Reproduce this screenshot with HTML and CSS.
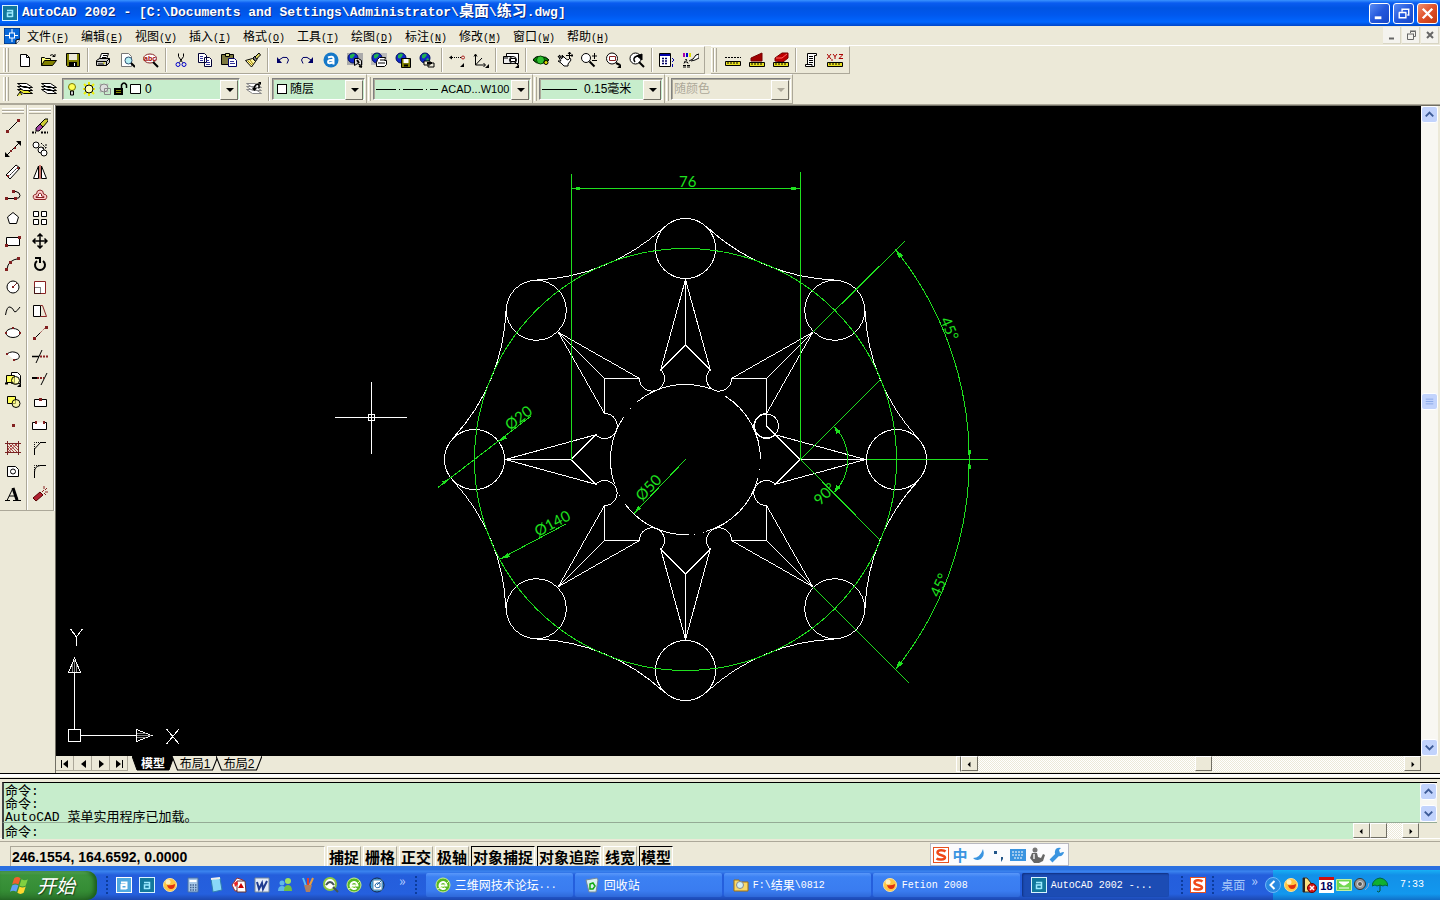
FILE: index.html
```
<!DOCTYPE html>
<html lang="zh-CN">
  <head>
    <meta charset="UTF-8" />
    <meta name="viewport" content="width=device-width, initial-scale=1.0" />
    <title>AutoCAD 2002</title>
    <link rel="stylesheet" href="styles.css" />
  </head>
  <body>
    <!-- shared symbols -->
    <svg class="defs" aria-hidden="true">
      <symbol id="acad" viewBox="0 0 16 16">
        <rect x=".5" y=".5" width="15" height="15" fill="#12789c" stroke="#d8f4ff" />
        <path d="M5 5.500h5.500v6.500M10.500 8H5.500v3.500h5" fill="none" stroke="#9beaff" stroke-width="1.500" />
      </symbol>
      <symbol id="globe" viewBox="0 0 16 16">
        <circle cx="6" cy="6" r="5" fill="#1328c8" stroke="#001060" />
        <path d="M3 3l3-1.500 2 1-1 2-2 2-2-.5zM8 6l2 1-1 3-2-1z" fill="#20b050" stroke="none" />
      </symbol>
      <symbol id="ie" viewBox="0 0 16 16">
        <circle cx="8" cy="8" r="7" fill="#58b820" stroke="#c8f090" />
        <path d="M4.500 8.500h7a3.500 3.500 0 1 0-1 2.500" fill="none" stroke="#fff" stroke-width="2" />
        <path d="M2 12Q9 11 14 4" fill="none" stroke="#e8ffb0" />
      </symbol>
      <symbol id="fetion" viewBox="0 0 16 16">
        <circle cx="8" cy="8" r="6.500" fill="#ffc640" stroke="#f8e0a0" />
        <circle cx="6" cy="5" r="2.500" fill="#fff0b8" />
        <path d="M5 8q4 1 8-1 0 5-4 5-3 0-4-4z" fill="#e03010" />
      </symbol>
      <symbol id="sogou" viewBox="0 0 16 16">
        <rect x=".5" y=".5" width="15" height="15" fill="#fff" stroke="#e85020" />
        <path d="M12.500 4.500C11 3 4.500 2.500 4.500 5.500S12 8 12 10.500 5.500 13 3.500 11.500" fill="none" stroke="#f04818" stroke-width="2.500" />
      </symbol>
    </svg>

    <header class="titlebar">
      <svg class="i" viewBox="0 0 16 16"><use href="#acad" /></svg>
      <h1>AutoCAD 2002 - [C:\Documents and Settings\Administrator\<span>桌面</span>\<span>练习</span>.dwg]</h1>
      <button class="win" aria-label="最小化"><svg viewBox="0 0 20 20"><path d="M5 14.500h7" stroke="#fff" stroke-width="3" /></svg></button>
      <button class="win" aria-label="还原"><svg viewBox="0 0 20 20"><path d="M5.500 9v5.500h7V9M5 9h8M8.500 8V5.500h7v6H14M8 5.500h8" stroke="#fff" fill="none" stroke-width="1.500" /></svg></button>
      <button class="win close" aria-label="关闭"><svg viewBox="0 0 20 20"><path d="M5 5l10 10M15 5L5 15" stroke="#fff" stroke-width="2.500" /></svg></button>
    </header>

    <nav class="menubar">
      <svg class="i" viewBox="0 0 16 16"><path d="M0 0h16v11l-4 5H0z" fill="#0868d8" stroke="#002060" /><path d="M8 1v4M8 10v4M1 7.500h4M10 7.500h4" stroke="#fff" /><rect x="5.500" y="5" width="5" height="5" stroke="#fff" /><path d="M16 11l-4 1v4" fill="#fff" /></svg>
      <button>文件<span>(<u>F</u>)</span></button>
      <button>编辑<span>(<u>E</u>)</span></button>
      <button>视图<span>(<u>V</u>)</span></button>
      <button>插入<span>(<u>I</u>)</span></button>
      <button>格式<span>(<u>O</u>)</span></button>
      <button>工具<span>(<u>T</u>)</span></button>
      <button>绘图<span>(<u>D</u>)</span></button>
      <button>标注<span>(<u>N</u>)</span></button>
      <button>修改<span>(<u>M</u>)</span></button>
      <button>窗口<span>(<u>W</u>)</span></button>
      <button>帮助<span>(<u>H</u>)</span></button>
      <div class="child-win">
        <button aria-label="最小化"><svg viewBox="0 0 16 16"><path d="M5 11.500h5" stroke="#666" stroke-width="2" /></svg></button>
        <button aria-label="还原"><svg viewBox="0 0 16 16"><path d="M4.500 7v5.500h6V7M4 7h7M7.500 6V4.500h5v5H11M7 4h6" stroke="#666" fill="none" /></svg></button>
        <button aria-label="关闭"><svg viewBox="0 0 16 16"><path d="M5 5l6 6M11 5l-6 6" stroke="#666" stroke-width="2" /></svg></button>
      </div>
    </nav>

    <div class="bars bars-standard">
      <div class="bar">
        <i class="grip"></i>
        <button aria-label="新建"><svg class="i" viewBox="0 0 16 16"><path d="M3.500 2.500h6l3 3v9h-9z" fill="#fff" /><path d="M9.500 2.500v3h3" /></svg></button>
        <button aria-label="打开"><svg class="i" viewBox="0 0 16 16"><path d="M.5 13.500v-8h3l1 1h5v2" fill="#ffff80" /><path d="M.5 13.500l3-5h12l-4 5z" fill="#808000" /><path d="M9 3.500q2-2 4.500.5M14 2v2.500h-2.500" /></svg></button>
        <button aria-label="保存"><svg class="i" viewBox="0 0 16 16"><path d="M1.500 1.500h13v13h-12l-1-1z" fill="#808000" /><path d="M4 2h8v6H4z" fill="#ece9d8" stroke="none" /><path d="M4 10h8v4H4z" fill="#000" stroke="none" /><path d="M9.500 11v3" stroke="#fff" /></svg></button>
        <i class="sep"></i>
        <button aria-label="打印"><svg class="i" viewBox="0 0 16 16"><path d="M4.500 7l2-5.500h7l-2 5.500" fill="#fff" /><path d="M1.500 8.500l3-2h10v4l-3 3h-10z" fill="#ccc" /><path d="M1.500 9.500h10v4M11.500 9.500l3-3M3 12h6M8 3.500h4M7 5.500h4" /><path d="M8 11h2" stroke="#dd0" /></svg></button>
        <button aria-label="打印预览"><svg class="i" viewBox="0 0 16 16"><path d="M2.500 1.500h7l3 3v10h-10z" fill="#fff" stroke="#777" /><circle cx="9.500" cy="8.500" r="3.500" fill="#b8f0f4" stroke="#357" /><path d="M12 11l4 4" stroke-width="2" /></svg></button>
        <button aria-label="查找"><svg class="i" viewBox="0 0 16 16"><ellipse cx="7" cy="6.500" rx="6.500" ry="4.500" fill="#fff" stroke="#822" /><text x="1" y="9" class="abc">abc</text><path d="M10 10l5 5" stroke-width="2" /></svg></button>
        <i class="sep"></i>
        <button aria-label="剪切"><svg class="i" viewBox="0 0 16 16"><path d="M5.500 1.500v3l4 6M10.500 1.500v3l-4 6" /><circle cx="5" cy="12.500" r="2" stroke="#00c" /><circle cx="11" cy="12.500" r="2" stroke="#00c" /></svg></button>
        <button aria-label="复制"><svg class="i" viewBox="0 0 16 16"><path d="M1.500 1.500h6l2 2v7h-8zM7.500 5.500h5l2 2v7h-7z" fill="#fff" stroke="#003" /><path d="M3 4.500h3M3 6.500h3M3 8.500h3M9 8.500h3M9 10.500h4M9 12.500h4" stroke="#339" /></svg></button>
        <button aria-label="粘贴"><svg class="i" viewBox="0 0 16 16"><path d="M.5 2.500h12v10H.5z" fill="#7c7840" /><path d="M4.500 1.500h4v3h-4z" fill="#dd8" /><path d="M7.500 6.500h6l2 2v6h-8z" fill="#fff" stroke="#006" /><path d="M9 9.500h4M9 11.500h5" stroke="#339" /></svg></button>
        <button aria-label="特性匹配"><svg class="i" viewBox="0 0 16 16"><path d="M.5 8.500l7-2 3 3-4 5.500z" fill="#fff8a0" /><path d="M8 6l2-2 2.500 2.500-2 3z" fill="#888" /><path d="M10 5l4-4 1.500 2-4 4z" fill="#ddd860" /><path d="M3 9l4 4M5 8l3 4" stroke="#a08000" /></svg></button>
        <i class="sep"></i>
        <button aria-label="放弃"><svg class="i" viewBox="0 0 16 16"><path d="M4 8q4-4 8-2.500 3 2 0 6" stroke="#006" /><path d="M2 5v6h5z" fill="#006" stroke="none" /></svg></button>
        <button aria-label="重做"><svg class="i" viewBox="0 0 16 16"><path d="M12 8q-4-4-8-2.500-3 2 0 6" stroke="#006" /><path d="M14 5v6H9z" fill="#006" stroke="none" /></svg></button>
        <button aria-label="Point A"><svg class="i" viewBox="0 0 16 16"><circle cx="8" cy="8" r="7.500" fill="#1578c8" stroke="none" /><path d="M5 5.500q5-2 5.500 1v6M10.500 8Q5 7.500 5 10t5.500 0" stroke="#fff" stroke-width="2" /></svg></button>
        <button aria-label="网上会议"><svg class="i" viewBox="0 0 16 16"><path d="M0 1h16v12H0z" fill="#aaa" stroke="none" /><use href="#globe" /><path d="M7.500 6.500h4l3 2v5l-4-2-3 2z" fill="#ddd" /><path d="M10 8l2 3M12 14l3 1" stroke-width="2" /></svg></button>
        <button aria-label="发布"><svg class="i" viewBox="0 0 16 16"><path d="M0 1h16v12H0z" fill="#bbb" stroke="none" /><use href="#globe" /><path d="M6.500 7.500l2-2h6l-1 3h2v4l-2 2h-8v-4z" fill="#fff" /><path d="M7 11h7M9 8h4" /></svg></button>
        <button aria-label="电子传递"><svg class="i" viewBox="0 0 16 16"><use href="#globe" /><path d="M6.500 6.500h9v9h-9z" fill="#808000" /><path d="M8.500 7h5v4h-5z" fill="#fff" stroke="none" /><path d="M9 13.500h4" stroke-width="2" /></svg></button>
        <button aria-label="超链接"><svg class="i" viewBox="0 0 16 16"><use href="#globe" /><path d="M5 9h6v4H5zM9 11h6v4H9z" fill="#ece9d8" /><path d="M8 11h5" stroke-width="2" /></svg></button>
        <i class="sep"></i>
        <button aria-label="临时追踪点"><svg class="i" viewBox="0 0 16 16"><path d="M1 5.500h11" stroke-dasharray="1 1" /><path d="M0 5.500l3-2v4zM11 15h4v-4z" fill="#000" stroke="none" /><circle cx="14" cy="5.500" r="1.500" stroke="#a22" /></svg></button>
        <button aria-label="UCS"><svg class="i" viewBox="0 0 16 16"><path d="M2.500 3v10H12M2.500 13L9 6M1 4.500L2.500 2 4 4.500M10.500 11l2 2-2 2" /><path d="M12 16h4v-4z" fill="#000" stroke="none" /></svg></button>
        <i class="sep"></i>
        <button aria-label="命名视图"><svg class="i" viewBox="0 0 16 16"><path d="M3.500 1.500h12v10h-12z" fill="#fff" /><path d="M.5 4.500h9v7h-9z" fill="#eee" /><circle cx="10" cy="8" r="3.500" fill="#fff" /><path d="M7.500 6.500h5v3h-5zM12 10l3 3M1 6h4" /><path d="M12 16h4v-4z" fill="#000" stroke="none" /></svg></button>
        <i class="sep"></i>
        <button aria-label="三维动态观察"><svg class="i" viewBox="0 0 16 16"><path d="M0 8q3-5 8-3 5-1 8 3-4 4-8 3-5 1-8-3z" fill="#080" /><circle cx="7.500" cy="8" r="4" fill="#30c030" stroke="#040" /><circle cx="13" cy="10.500" r="2" fill="#dd0" /></svg></button>
        <button aria-label="实时平移"><svg class="i" viewBox="0 0 16 16"><path d="M1 4l4 3-3-4 4 3-1-3 4 4 2 1 2-2 1 2-3 4v2H7L4 11 1 9h3z" fill="#fff" /><path d="M12.500 0v7M9 3.500h7M11 2l1.500-2L14 2M14.500 2l1.500 1.500L14.500 5" /></svg></button>
        <button aria-label="实时缩放"><svg class="i" viewBox="0 0 16 16"><circle cx="5" cy="6" r="4.500" fill="#fff" /><path d="M8.500 9.500l5 5" stroke-width="2" /><path d="M13.500 1v6M11 4h5M11 8.500h5" /></svg></button>
        <button aria-label="窗口缩放"><svg class="i" viewBox="0 0 16 16"><circle cx="7" cy="6.500" r="5.500" fill="#fff" /><path d="M4.500 4.500h6v4h-6z" stroke="#822" /><path d="M11 11l4 2" stroke-width="2" /><path d="M12 16h4v-4z" fill="#000" stroke="none" /></svg></button>
        <button aria-label="缩放上一个"><svg class="i" viewBox="0 0 16 16"><circle cx="6.500" cy="6.500" r="5.500" fill="#fff" /><path d="M10 10l5 5" stroke-width="2" /><path d="M6 10q-3-4 2-6l3-1" stroke-width="1.500" /><path d="M13 2v6L8 4z" fill="#000" /></svg></button>
        <i class="sep"></i>
        <button aria-label="设计中心"><svg class="i" viewBox="0 0 16 16"><path d="M.5 1.500h11v13H.5z" fill="#fff" /><path d="M1 3h10" stroke="#00a" stroke-width="2" /><path d="M3 6.500h6M3 9h6M3 11.500h6" stroke="#006" stroke-width="1.500" stroke-dasharray="2 1" /><path d="M13 6l2 2-2 2M13.500 12v3" stroke="#00a" stroke-width="1" /></svg></button>
        <button aria-label="特性"><svg class="i" viewBox="0 0 16 16"><path d="M0 1h2v4H0z" fill="#a0a" stroke="none" /><path d="M3 1h2v4H3z" fill="#00c" stroke="none" /><path d="M6 1h2v4H6z" fill="#dd0" stroke="none" /><path d="M1 11.500L3 7l2 4.500M2 10h2M0 13.500h8M0 15h8" stroke-dasharray="3 1" /><path d="M6 9l4-2 3-4 3-1v4l-4 2-4 1" fill="#fff" /></svg></button>
      </div>
      <div class="bar">
        <i class="grip"></i>
        <button aria-label="距离"><svg class="i" viewBox="0 0 16 16"><path d="M0 5.500h16" stroke-dasharray="2 1" /><path d="M.5 9.500h15v4H.5z" fill="#e8e020" /><path d="M3 10v2M6 10v2M9 10v2M12 10v2" /></svg></button>
        <button aria-label="面积"><svg class="i" viewBox="0 0 16 16"><path d="M2 9V6l11-5v8z" fill="#a00000" stroke="#700" /><path d="M.5 10.500h15v4H.5z" fill="#e8e020" /><path d="M3 11v2M6 11v2M9 11v2M12 11v2" /></svg></button>
        <button aria-label="质量特性"><svg class="i" viewBox="0 0 16 16"><path d="M2 9V6l7-5h6v5l-5 4z" fill="#c00000" stroke="#700" /><path d="M3 6h6l5-4" stroke="#f66" /><path d="M.5 10.500h15v4H.5z" fill="#e8e020" /><path d="M3 11v2M6 11v2M9 11v2M12 11v2" /></svg></button>
        <i class="sep"></i>
        <button aria-label="列表"><svg class="i" viewBox="0 0 16 16"><path d="M4.500 1.500h9v2h-2v11h-9v-2h2z" fill="#fff" /><path d="M6 4.500h4M6 6.500h4M6 8.500h4M6 10.500h4M3 12.500h6v2" /></svg></button>
        <button aria-label="定位点"><svg class="i" viewBox="0 0 16 16"><path d="M0 2l4 5M4 2L0 7M6 2l2 2.500L10 2M8 4v3M12 2.500h4l-4 4h4M5 7v2" stroke="#a00" /><path d="M.5 10.500h15v4H.5z" fill="#e8e020" /><path d="M3 11v2M6 11v2M9 11v2M12 11v2" /></svg></button>
      </div>
    </div>

    <div class="bars bars-props">
      <div class="bar">
        <i class="grip"></i>
        <button aria-label="将对象的图层置为当前"><svg class="i" viewBox="0 0 16 16"><path d="M.5 8.500h9l6 4h-9z" fill="#ee3" /><path d="M.5 5.500h9l6 4h-9zM.5 2.500h9l6 4h-9z" fill="#fff" /><path d="M0 15l3-4 2 3" fill="#ee3" /></svg></button>
        <button aria-label="图层"><svg class="i" viewBox="0 0 16 16"><path d="M.5 8.500h9l6 4h-9zM.5 5.500h9l6 4h-9zM.5 2.500h9l6 4h-9z" fill="#fff" /></svg></button>
        <div class="combo combo-layer">
          <div class="layer-state">
            <svg class="i" viewBox="0 0 16 16"><circle cx="7" cy="6" r="3.500" fill="#ff5" stroke="#770" /><path d="M5.500 10h3v4h-3z" fill="#ccc" /></svg>
            <svg class="i" viewBox="0 0 16 16"><path d="M3 3l10 10M13 3L3 13M8 1v14M2 8h12" stroke="#ee0" stroke-width="2" /><circle cx="8" cy="8" r="4" fill="#ffb" /></svg>
            <svg class="i" viewBox="0 0 16 16"><path d="M3 3l8 8M11 3l-8 8" stroke="#bbb" stroke-width="2" /><circle cx="7" cy="7" r="4" fill="#ddd" stroke="#888" /><path d="M7.500 7.500h6v6h-6z" stroke="#888" /></svg>
            <svg class="i" viewBox="0 0 16 16"><path d="M1 7h9v7H1z" fill="#000" stroke="none" /><path d="M3 9.500h5M3 11.500h5" stroke="#880" /><path d="M8.500 7V4q2.500-4 5 0v3" stroke-width="1.500" /></svg>
            <svg class="i" viewBox="0 0 16 16"><path d="M1.500 3.500h10v9h-10z" fill="#fff" /></svg>
          </div>
          <select aria-label="图层"><option>0</option></select>
        </div>
        <button aria-label="上一个图层"><svg class="i" viewBox="0 0 16 16"><path d="M.5 8.500h9l6 4h-9zM.5 5.500h9l6 4h-9zM.5 2.500h9l6 4h-9z" fill="#fff" stroke="#888" /><path d="M8 9q0-6 5-6v4" stroke-width="1.500" /><path d="M6 7h5l-2.500 3zM12 1h3v3z" fill="#000" stroke="none" /></svg></button>
        <i class="sep"></i>
        <div class="combo combo-color">
          <span class="swatch"></span>
          <select aria-label="颜色"><option>随层</option></select>
        </div>
      </div>
      <div class="bar">
        <i class="grip narrow"></i>
        <div class="combo combo-ltype">
          <span class="line dashdot"></span>
          <select aria-label="线型"><option>ACAD...W100</option></select>
        </div>
      </div>
      <div class="bar">
        <i class="grip narrow"></i>
        <div class="combo combo-weight">
          <span class="line"></span>
          <select aria-label="线宽"><option>0.15毫米</option></select>
        </div>
      </div>
      <div class="bar">
        <i class="grip narrow"></i>
        <div class="combo combo-plot">
          <select aria-label="打印样式" disabled><option>随颜色</option></select>
        </div>
      </div>
    </div>

    <main class="workspace">
      <aside class="dock">
        <!-- 绘图 -->
        <div class="tools">
          <i class="hgrip"></i>
          <button aria-label="直线"><svg class="i" viewBox="0 0 16 16"><path d="M3 13L13 3" /><path d="M1 12h3v3H1zM12 1h3v3h-3z" class="r" /></svg></button>
          <button aria-label="构造线"><svg class="i" viewBox="0 0 16 16"><path d="M2 14L14 2" /><path d="M0 16v-5l5 5zM16 0v5l-5-5z" fill="#000" stroke="none" /><path d="M5 9h2v2H5zM9 6h2v2H9z" class="r" /></svg></button>
          <button aria-label="多线"><svg class="i" viewBox="0 0 16 16"><path d="M1 11L11 1l4 3L5 15z" fill="#fff" /><path d="M3 13L13 3" stroke-dasharray="2 1" /><path d="M2 11h2v2H2zM12 3h2v2h-2z" class="r" /></svg></button>
          <button aria-label="多段线"><svg class="i" viewBox="0 0 16 16"><path d="M2 11.500h9q4 0 4-3t-4-4H9" /><path d="M0 10h3v3H0zM9 10h3v3H9zM7 3h3v3H7z" class="r" /></svg></button>
          <button aria-label="正多边形"><svg class="i" viewBox="0 0 16 16"><path d="M8 2.500L13.500 7l-2 6.500h-7L2.500 7z" fill="#fff" /></svg></button>
          <button aria-label="矩形"><svg class="i" viewBox="0 0 16 16"><path d="M1.500 4.500h13v8h-13z" fill="#fff" /><path d="M0 11h3v3H0zM13 3h3v3h-3z" class="r" /></svg></button>
          <button aria-label="圆弧"><svg class="i" viewBox="0 0 16 16"><path d="M2 13Q3 4 14 2.500" /><path d="M0 12h3v3H0zM4 5h3v3H4zM12 1h3v3h-3z" class="r" /></svg></button>
          <button aria-label="圆"><svg class="i" viewBox="0 0 16 16"><circle cx="8" cy="8" r="6" fill="#fff" /><path d="M8 8l4-4" stroke="#722" /><path d="M7 7h2v2H7z" class="r" /></svg></button>
          <button aria-label="样条曲线"><svg class="i" viewBox="0 0 16 16"><path d="M.5 13Q2 4 5 5t4 4 6-4" /></svg></button>
          <button aria-label="椭圆"><svg class="i" viewBox="0 0 16 16"><ellipse cx="8" cy="8" rx="7" ry="4.500" fill="#fff" /><path d="M0 7h2v2H0zM14 7h2v2h-2zM7 2h2v2H7z" class="r" /></svg></button>
          <button aria-label="椭圆弧"><svg class="i" viewBox="0 0 16 16"><path d="M2 6q5-4 11-.5 4 5-3.500 6.500" fill="#fff" /><path d="M1 5h2v2H1zM8 11h2v2H8z" class="r" /></svg></button>
          <button aria-label="插入块"><svg class="i" viewBox="0 0 16 16"><path d="M6.500 1.500h6l3 3v8h-9z" fill="#fff" /><path d="M1.500 4.500h8v7h-8z" fill="#ff5" /><circle cx="10.500" cy="9.500" r="4" fill="#ff8" fill-opacity=".6" /><path d="M0 12.500h3" stroke-width="2" /><path d="M12 16h4v-4z" fill="#000" stroke="none" /></svg></button>
          <button aria-label="创建块"><svg class="i" viewBox="0 0 16 16"><path d="M2.500 2.500h8v7h-8z" fill="#ff5" /><circle cx="11" cy="9.500" r="4" fill="#ff8" fill-opacity=".6" /></svg></button>
          <button aria-label="点"><svg class="i" viewBox="0 0 16 16"><path d="M7 7h3v3H7z" class="r" /></svg></button>
          <button aria-label="图案填充"><svg class="i" viewBox="0 0 16 16"><path d="M4 4l8 8M7 4l6 6M10 4l3 3M3 6l6 6M3 9l3 3M12 4l-9 8M8 4L3 9" stroke="#a44" /><path d="M2.500 1v14M13.500 1v14M0 3.500h16M0 12.500h16" stroke="#722" /></svg></button>
          <button aria-label="面域"><svg class="i" viewBox="0 0 16 16"><path d="M2.500 3.500h8l3 3v7h-11z" fill="#fff" /><circle cx="8" cy="8.500" r="2.500" /></svg></button>
          <button aria-label="多行文字"><svg class="i" viewBox="0 0 16 16"><path d="M2 14.500L8 2l5 12.500M4 10h7" stroke-width="1" /><path d="M8 2l4 12" stroke-width="3" /><path d="M0 14.500h5M8 14.500h8" /></svg></button>
        </div>
        <!-- 修改 -->
        <div class="tools">
          <i class="hgrip"></i>
          <button aria-label="删除"><svg class="i" viewBox="0 0 16 16"><path d="M8 6l5-5h3v2l-5 6z" fill="#cc3" /><path d="M4 10l4-4 3 3-4 4H4z" fill="#a040a0" /><path d="M0 14.500h4M9 14.500h7" stroke-width="2" stroke-dasharray="2 1" /></svg></button>
          <button aria-label="复制对象"><svg class="i" viewBox="0 0 16 16"><circle cx="4" cy="4" r="3" fill="#fff" /><circle cx="9" cy="9" r="3" fill="#fff" /><circle cx="12" cy="12" r="3" fill="#fff" /><path d="M9 2l5 5M14 3v4h-4" stroke-dasharray="2 1" /></svg></button>
          <button aria-label="镜像"><svg class="i" viewBox="0 0 16 16"><path d="M6.500 2v12.500h-5zM9.500 2v12.500h5z" fill="#fff" /><path d="M8 1v14" stroke="#a00" /></svg></button>
          <button aria-label="偏移"><svg class="i" viewBox="0 0 16 16"><path d="M2.500 12.500Q-1 8 4.500 7q0-4 3.500-4t3.500 4q5.500 1 2 5.500z" fill="#fcc" stroke="#822" /><path d="M4 10.500q-1-1.500 2.500-1.500V7q1.500-2 3 0v2q3.500 0 2.500 1.500z" fill="#fff" stroke="#822" /></svg></button>
          <button aria-label="阵列"><svg class="i" viewBox="0 0 16 16"><path d="M1.500 1.500h5v5h-5zM9.500 1.500h5v5h-5zM1.500 9.500h5v5h-5zM9.500 9.500h5v5h-5z" fill="#fff" /></svg></button>
          <button aria-label="移动"><svg class="i" viewBox="0 0 16 16"><path d="M8 1v14M1 8h14M5.500 3.500L8 1l2.500 2.500M5.500 12.500L8 15l2.500-2.500M3.500 5.500L1 8l2.500 2.500M12.500 5.500L15 8l-2.500 2.500" stroke-width="1.500" /></svg></button>
          <button aria-label="旋转"><svg class="i" viewBox="0 0 16 16"><path d="M5 5a5 5 0 1 0 6 0" stroke-width="2" /><path d="M3 2h5v5" stroke-width="2" /></svg></button>
          <button aria-label="缩放"><svg class="i" viewBox="0 0 16 16"><path d="M2.500 2.500h11v12h-11z" fill="#fff" stroke="#822" /><path d="M2.500 8.500h6v6h-6z" stroke-dasharray="1 1" /></svg></button>
          <button aria-label="拉伸"><svg class="i" viewBox="0 0 16 16"><path d="M1.500 3.500h7v11h-7z" fill="#fff" /><path d="M8.500 3.500h2l4 11h-6" stroke="#822" /></svg></button>
          <button aria-label="拉长"><svg class="i" viewBox="0 0 16 16"><path d="M3 13l5-5" /><path d="M8 8l6-6" stroke="#822" stroke-dasharray="1 1" /><path d="M1 12h3v3H1zM13 1h3v3h-3z" class="r" /></svg></button>
          <button aria-label="修剪"><svg class="i" viewBox="0 0 16 16"><path d="M4 15l6-13" /><path d="M0 8.500h7" stroke-width="1.500" /><path d="M8 8.500h8" stroke="#822" stroke-dasharray="2 1" stroke-width="2" /></svg></button>
          <button aria-label="延伸"><svg class="i" viewBox="0 0 16 16"><path d="M9 14l6-12" /><path d="M0 7h5" stroke-width="2" /><path d="M5 7h7" stroke="#822" stroke-dasharray="2 1" stroke-width="2" /></svg></button>
          <button aria-label="打断于点"><svg class="i" viewBox="0 0 16 16"><path d="M2.500 5.500h12v7h-12z" fill="#fff" /><path d="M7 4h3v3H7z" class="r" /></svg></button>
          <button aria-label="打断"><svg class="i" viewBox="0 0 16 16"><path d="M4 5.500H.5v7h14v-7H12" fill="#fff" /><path d="M3 4h2v3H3zM11 4h2v3h-2z" class="r" /></svg></button>
          <button aria-label="倒角"><svg class="i" viewBox="0 0 16 16"><path d="M2.500 15V9l6-6.500H14" /><path d="M2.500 9V2.500H9" stroke-dasharray="1 1" /></svg></button>
          <button aria-label="圆角"><svg class="i" viewBox="0 0 16 16"><path d="M2.500 15V9q0-6 6-6.500H14" /><path d="M2.500 9V2.500H9" stroke-dasharray="1 1" /></svg></button>
          <button aria-label="分解"><svg class="i" viewBox="0 0 16 16"><path d="M1 12l7-6 3 3-7 6z" fill="#b02030" stroke="#500" /><path d="M10 6l2-2M12 0v3M15 2l-2 2M16 6h-3M12 7l2 2" stroke="#822" /></svg></button>
        </div>
      </aside>

      <section class="view">
        <div class="canvas-row">
          <svg class="canvas" viewBox="56 106 1365 650" role="img" aria-label="练习.dwg">
            <g transform="translate(685.5 459.5)" class="white">
              <g id="arm">
                <circle cx="0" cy="-211" r="30" />
                <path d="M22-232A198 198 0 0 0 148.500-179.500" />
                <path d="M0-180L-24.750-89.800L0-114.500L24.750-89.800L0-180V-114.500" />
                <path d="M24.750-89.800A12.500 12.500 0 1 0 46-81" />
              </g>
              <use href="#arm" transform="rotate(45)" />
              <use href="#arm" transform="rotate(90)" />
              <use href="#arm" transform="rotate(135)" />
              <use href="#arm" transform="rotate(180)" />
              <use href="#arm" transform="rotate(225)" />
              <use href="#arm" transform="rotate(270)" />
              <use href="#arm" transform="rotate(315)" />
            </g>
            <!-- hub circle, broken where it was trimmed -->
            <g class="white">
              <path d="M637 402A75 75 0 0 1 711 389M725 396A75 75 0 0 1 760.500 459.500M758 478A75 75 0 0 1 706 531.500M689.500 534.500A75 75 0 0 1 625.500 504.500M614.500 484A75 75 0 0 1 623.500 417.500" />
              <path d="M630 408.500h1M619 495.500h1M694 534.500h1M703 532.500h1M759 469.500h1" />
              <circle cx="766.500" cy="426" r="12" />
              <path d="M766.500 413V426L800 459.500" />
            </g>
            <g class="green">
              <circle cx="685.500" cy="459.500" r="211" />
              <path d="M571.500 174V459.500M800.500 172V459.500M571 188.500H800" />
              <path d="M813 332L905 241M813 587L909 683M800.500 459.500L880 380M800.500 459.500L880 540M867 459.500H988" />
              <path d="M895.500 249.500A336 336 0 0 1 895.500 669.500M834.500 427A46.500 46.500 0 0 1 834.500 492" />
              <path d="M438 487.500L531 416M500 559L566 524M634 513.500L685.500 459.500" />
            </g>
            <g class="arrow">
              <path d="M571 188.500l9-2v4zM800 188.500l-9-2v4z" />
              <path d="M895.500 249.500l3.500 9 4-3zM895.500 669.500l3.500-9 4 3zM969.500 459l-2-9h4zM969.500 460l-2 9h4z" />
              <path d="M834.500 427l2 7 4-3zM834.500 492l2-7 4 3z" />
              <path d="M499 441.500l6-6 2 3zM450 478.500l-6 6-2-3zM500 559l8-6 2 4zM634 513.500l4-8 3 3z" />
            </g>
            <g class="dim">
              <text x="679" y="187">76</text>
              <text transform="translate(940 320) rotate(66)">45°</text>
              <text transform="translate(939 598) rotate(-65)">45°</text>
              <text transform="translate(820 506) rotate(-45)">90°</text>
              <text transform="translate(510 431) rotate(-37)">Ø20</text>
              <text transform="translate(538 537) rotate(-28)">Ø140</text>
              <text transform="translate(642 502) rotate(-46)">Ø50</text>
            </g>
            <!-- cursor and UCS icon -->
            <g class="white">
              <path d="M335 417.500H407M371.500 382V454M368.500 414.500h6v6h-6z" />
              <path d="M68.500 729.500h12v12h-12zM74.500 729V672M81 735.500H136M68.500 672.500h12l-6-14.500zM136.500 729.500v12l15-6z" />
              <path class="hatch" d="M72.500 664v8M74.500 660v12M76.500 664v8M137 733.500h9M137 735.500h14M137 737.500h9" />
              <path d="M70.500 629L76.500 637V646M82.500 629L76.500 637M166.500 729L179 744M179 729L166.500 744" />
            </g>
          </svg>
          <div class="vscroll">
            <button class="luna" aria-label="向上滚动"><svg viewBox="0 0 16 16"><path d="M4 10l4-4 4 4" /></svg></button>
            <i class="space-before"></i>
            <button class="luna thumb" aria-label="垂直滑块"><svg viewBox="0 0 16 16"><path d="M4 5.500h8M4 8h8M4 10.500h8" class="lines" /></svg></button>
            <i class="space-after"></i>
            <button class="luna" aria-label="向下滚动"><svg viewBox="0 0 16 16"><path d="M4 6l4 4 4-4" /></svg></button>
          </div>
        </div>
        <div class="sheet-row">
          <div class="sheet-nav">
            <button aria-label="第一个"><svg viewBox="0 0 16 16"><path d="M4 4h1v8H4zM11 4v8L6 8z" /></svg></button>
            <button aria-label="上一个"><svg viewBox="0 0 16 16"><path d="M11 4v8L6 8z" /></svg></button>
            <button aria-label="下一个"><svg viewBox="0 0 16 16"><path d="M6 4v8l5-4z" /></svg></button>
            <button aria-label="最后一个"><svg viewBox="0 0 16 16"><path d="M5 4v8l5-4zM11 4h1v8h-1z" /></svg></button>
          </div>
          <div class="sheets">
            <button class="sheet active"><svg viewBox="0 0 42 15" preserveAspectRatio="none"><path d="M0 0L5 14H37L42 0" /></svg><span>模型</span></button>
            <button class="sheet"><svg viewBox="0 0 42 15" preserveAspectRatio="none"><path d="M0 0L5 14H37L42 0" /></svg><span>布局1</span></button>
            <button class="sheet"><svg viewBox="0 0 42 15" preserveAspectRatio="none"><path d="M0 0L5 14H37L42 0" /></svg><span>布局2</span></button>
          </div>
          <div class="hscroll">
            <i class="split"></i>
            <button class="classic" aria-label="向左滚动"><svg viewBox="0 0 16 16"><path d="M9 5v6L6 8z" /></svg></button>
            <i class="track left"></i>
            <button class="classic" aria-label="水平滑块"></button>
            <i class="track right"></i>
            <button class="classic" aria-label="向右滚动"><svg viewBox="0 0 16 16"><path d="M7 5v6l3-3z" /></svg></button>
          </div>
        </div>
      </section>
    </main>

    <section class="command">
      <div class="history">
        <div class="history-text">
          <p>命令<span>:</span></p>
          <p>命令<span>:</span></p>
          <p><span>AutoCAD </span>菜单实用程序已加载。</p>
        </div>
        <div class="vscroll">
          <button class="luna" aria-label="历史向上"><svg viewBox="0 0 16 16"><path d="M4 10l4-4 4 4" /></svg></button>
          <i class="space-after"></i>
          <button class="luna" aria-label="历史向下"><svg viewBox="0 0 16 16"><path d="M4 6l4 4 4-4" /></svg></button>
        </div>
      </div>
      <div class="prompt">
        <label for="cmd">命令<span>:</span></label>
        <input id="cmd" type="text" />
        <div class="hscroll small">
          <button class="classic" aria-label="命令向左"><svg viewBox="0 0 16 16"><path d="M9 5v6L6 8z" /></svg></button>
          <button class="classic" aria-label="命令滑块"></button>
          <i class="track"></i>
          <button class="classic" aria-label="命令向右"><svg viewBox="0 0 16 16"><path d="M7 5v6l3-3z" /></svg></button>
        </div>
      </div>
    </section>

    <footer class="status">
      <output class="coords">246.1554, 164.6592, 0.0000</output>
      <button>捕捉</button>
      <button>栅格</button>
      <button>正交</button>
      <button>极轴</button>
      <button class="on">对象捕捉</button>
      <button class="on">对象追踪</button>
      <button>线宽</button>
      <button class="on">模型</button>
      <!-- floating input method bar -->
      <div class="ime">
        <svg viewBox="0 0 16 16"><use href="#sogou" /></svg>
        <span>中</span>
        <svg viewBox="0 0 16 16"><path d="M12 2q3 9-5 11-3 .5-5-2 7 0 10-9z" fill="#3a94e0" /></svg>
        <svg viewBox="0 0 16 16"><path d="M4 4h3v3H4z" fill="#258" /><path d="M11 10h2v2l-2 3z" fill="#258" /></svg>
        <svg viewBox="0 0 16 16"><path d="M0 2h16v12H0z" fill="#3a94e0" /><path d="M2 5h12M2 8h12M4 11h8" stroke="#fff" stroke-dasharray="2 1" /></svg>
        <svg viewBox="0 0 16 16"><circle cx="6" cy="3" r="2.500" fill="#777" /><path d="M3 6h5l1 4 3 1 2-4 2 1-2 6-4 2H5L1 11z" fill="#666" /><path d="M5 7v5" stroke="#ccc" stroke-width="2" /></svg>
        <svg viewBox="0 0 16 16"><path d="M2 14L9 7" stroke="#3a94e0" stroke-width="4" /><path d="M14 5l-3 1-1-3 2-2q-5-1-6 3t3 5q5 1 6-4z" fill="#3a94e0" /></svg>
      </div>
    </footer>

    <div class="taskbar">
      <button class="start">
        <svg viewBox="0 0 20 20"><path d="M4 3q3-2 6 0L8 9q-3-2-6 0z" fill="#f06030" /><path d="M11 4q3 2 6 0l-2 6q-3 2-6 0z" fill="#80d040" /><path d="M2 10q3-2 6 0l-2 6q-3-2-6 0z" fill="#60a0f8" /><path d="M9 11q3 2 6 0l-2 6q-3 2-6 0z" fill="#ffd830" /></svg>
        <span>开始</span>
      </button>
      <div class="quick">
        <i class="dots"></i>
        <button aria-label="AutoCAD"><svg viewBox="0 0 16 16"><rect x=".5" y=".5" width="15" height="15" fill="#4fa8e0" stroke="#fff" /><path d="M5 5.500h5.500v6.500M10.500 8H5.500v3.500h5" fill="none" stroke="#fff" stroke-width="2" /></svg></button>
        <button aria-label="AutoCAD 2002"><svg viewBox="0 0 16 16"><use href="#acad" /></svg></button>
        <button aria-label="飞信"><svg viewBox="0 0 16 16"><use href="#fetion" /></svg></button>
        <button aria-label="计算器"><svg viewBox="0 0 16 16"><path d="M3 1h10v14H3z" fill="#a8c8e8" stroke="#4870a8" /><path d="M4.500 3h7v2h-7z" fill="#fff" /><path d="M5 8h7M5 10.500h7M5 13h7" stroke="#406090" stroke-width="1.500" stroke-dasharray="1.500 1" /></svg></button>
        <button aria-label="记事本"><svg viewBox="0 0 16 16"><path d="M3 2l9-1 2 12-9 2z" fill="#88d8f8" stroke="#3080b0" /><path d="M3 2l9-1" stroke="#eee" stroke-width="2" /></svg></button>
        <button aria-label="纸牌"><svg viewBox="0 0 16 16"><path d="M1 8l5-7 6 2-1 10-7 1z" fill="#fff" stroke="#933" /><path d="M6 4h8l1 11H6z" fill="#fff" stroke="#633" /><path d="M10 6l3 5H7z" fill="#c00" /><path d="M3 6l3-2 1 3-3 3z" fill="#e22" /></svg></button>
        <button aria-label="Word"><svg viewBox="0 0 16 16"><path d="M1 1h14v14H1z" fill="#e4ecfa" stroke="#789" /><path d="M3 5l2 7 3-6 1 6 4-8" fill="none" stroke="#203c90" stroke-width="2" /></svg></button>
        <button aria-label="Messenger"><svg viewBox="0 0 16 16"><circle cx="5" cy="6" r="2.500" fill="#60b8e8" /><path d="M1 14q0-5 4-5t4 5z" fill="#60b8e8" /><circle cx="11" cy="4" r="3" fill="#a0e060" /><path d="M7 14q0-6 4-6t4 6z" fill="#70c040" /></svg></button>
        <button aria-label="画图"><svg viewBox="0 0 16 16"><path d="M3 1l3 8" stroke="#60c0f0" stroke-width="2" /><path d="M13 1l-4 9" stroke="#e8a040" stroke-width="2" /><path d="M8 1v9" stroke="#e04030" stroke-width="2" /><path d="M4 8h8l-2 7H6z" fill="#b08060" /></svg></button>
        <button aria-label="搜索"><svg viewBox="0 0 16 16"><circle cx="7" cy="7" r="6" fill="#fff" stroke="#90c840" stroke-width="2" /><path d="M3 8q4-6 8 0M10 10l5 5" fill="none" stroke="#455" stroke-width="2" /></svg></button>
        <button aria-label="Internet Explorer"><svg viewBox="0 0 16 16"><use href="#ie" /></svg></button>
        <button aria-label="Outlook"><svg viewBox="0 0 16 16"><circle cx="8" cy="8" r="7" fill="#48a8e8" stroke="#124" /><path d="M4 3h9v10H4z" fill="#fff" stroke="#58a" /><path d="M6 8q1-3 5-2v4q-5 2-5-2M8 8l5-5" fill="none" stroke="#2468a8" /></svg></button>
        <span class="more">»</span>
      </div>
      <div class="tasks">
        <i class="dots"></i>
        <button class="task"><svg viewBox="0 0 16 16"><use href="#ie" /></svg>三维网技术论坛<span>...</span></button>
        <button class="task"><svg viewBox="0 0 16 16"><path d="M2 3l11-2 1 2-2 12H5z" fill="#d8f0f0" stroke="#789" /><path d="M6 7l3-1 2 3-2 3H6z" fill="none" stroke="#1a1" stroke-width="1.500" /></svg>回收站</button>
        <button class="task"><svg viewBox="0 0 16 16"><path d="M1 3h5l1 2h8v9H1z" fill="#f8d868" stroke="#a07010" /><circle cx="7" cy="8" r="3.500" fill="#d0f0f8" stroke="#888" /></svg><span>F:\</span>结果<span>\0812</span></button>
        <button class="task"><svg viewBox="0 0 16 16"><use href="#fetion" /></svg><span>Fetion 2008</span></button>
        <button class="task active"><svg viewBox="0 0 16 16"><use href="#acad" /></svg><span>AutoCAD 2002 -...</span></button>
      </div>
      <div class="deskband">
        <i class="dots"></i>
        <svg viewBox="0 0 16 16"><use href="#sogou" /></svg>
        <i class="dots"></i>
        <a href="#desktop">桌面</a>
        <span class="more">»</span>
      </div>
      <div class="tray">
        <button class="expand" aria-label="显示隐藏的图标"><svg viewBox="0 0 16 16"><circle cx="8" cy="8" r="7.500" fill="#2888e0" stroke="#70b8f8" /><path d="M9.500 4l-4 4 4 4" fill="none" stroke="#fff" stroke-width="2" /></svg></button>
        <svg viewBox="0 0 16 16"><use href="#fetion" /></svg>
        <svg viewBox="0 0 16 16"><path d="M2 1v14h8V6L6 1z" fill="#f8e080" stroke="#432" /><path d="M3 1v14" stroke="#222" stroke-width="2" /><circle cx="11" cy="11" r="4.500" fill="#d81818" stroke="#600" /><path d="M9 9l4 4M13 9l-4 4" stroke="#fff" stroke-width="1.500" /></svg>
        <span class="date">18</span>
        <svg viewBox="0 0 16 16"><path d="M.5 2.500h15v11H.5z" fill="#70d850" stroke="#c0f0a0" /><path d="M3 5h10l-4 3H7zM3 11h10" fill="#fff" stroke="#fff" /></svg>
        <svg viewBox="0 0 16 16"><circle cx="6" cy="7" r="5.500" fill="#999" stroke="#333" /><circle cx="6" cy="7" r="2.500" fill="#555" stroke="#ddd" /><path d="M11 13q4-3 4-7" fill="none" stroke="#9ac" /></svg>
        <svg viewBox="0 0 16 16"><path d="M0 9Q1 2 8 1q7 1 8 8l-3-1-2 1-3-1-3 1-2-1z" fill="#10b030" stroke="#064" /><path d="M8 8v6q-1 2-3 0" fill="none" stroke="#053" /></svg>
        <time>7:33</time>
      </div>
    </div>
  </body>
</html>
```

FILE: styles.css
```
* {
  box-sizing: border-box;
}
body {
  margin: 0;
  height: 100vh;
  display: flex;
  flex-direction: column;
  overflow: hidden;
  background-color: #ece9d8;
  color: #000;
  font-family: "Liberation Sans", "Noto Sans CJK SC", sans-serif;
  font-size: 12px;
}
button,
select,
input {
  margin: 0;
  padding: 0;
  border: 0;
  background: none;
  color: inherit;
  font: inherit;
}
button {
  flex: none;
}
svg {
  display: block;
  flex: none;
}
.defs {
  position: absolute;
  width: 0;
  height: 0;
}
.i {
  width: 16px;
  height: 16px;
  fill: none;
  stroke: #000;
}
.r {
  fill: #822020;
  stroke: none;
}
.abc {
  font: bold 7px "Liberation Sans", sans-serif;
  fill: #a00000;
  stroke: none;
}

/* title bar */
.titlebar {
  flex: none;
  height: 26px;
  display: flex;
  align-items: center;
  gap: 3px;
  padding: 0 2px;
  background: linear-gradient(#3a93ff 0, #0a5cf0 3px, #0054e3 8px, #0058ee 15px, #0066ff 22px, #0046c8 26px);
}
.titlebar h1 {
  flex: 1;
  margin: 0;
  padding-left: 1px;
  color: #fff;
  font: bold 13px "Liberation Mono", "Noto Sans CJK SC", monospace;
  line-height: 20px;
  text-shadow: 1px 1px #0a2a80;
  white-space: nowrap;
}
.titlebar h1 span {
  font-size: 15px;
}
.win {
  width: 21px;
  height: 21px;
  border: 1px solid #fff;
  border-radius: 3px;
  background: linear-gradient(135deg, #5a8cf4, #2458dc 50%, #1848c8);
}
.win.close {
  background: linear-gradient(135deg, #f09070, #e05028 50%, #c03810);
}
.win svg {
  width: 19px;
  height: 19px;
}

/* menu bar */
.menubar {
  flex: none;
  height: 20px;
  display: flex;
  align-items: center;
  padding-left: 4px;
  border-bottom: 1px solid #fff;
  font-family: "Noto Sans CJK SC", sans-serif;
}
.menubar > .i {
  margin-right: 1px;
}
.menubar > button {
  width: 54px;
  line-height: 18px;
  white-space: nowrap;
}
.menubar span {
  font: 10px "Liberation Mono", monospace;
}
.child-win {
  display: flex;
  gap: 1px;
  margin-left: auto;
  padding-right: 1px;
}
.child-win button {
  width: 18px;
  height: 17px;
  padding-left: 1px;
  background-color: #f4f3ee;
  border-right: 1px solid #d8d5c4;
  border-bottom: 1px solid #d8d5c4;
}
.child-win svg {
  width: 16px;
  height: 16px;
}

/* horizontal toolbars */
.bars {
  flex: none;
  display: flex;
}
.bars-standard {
  height: 28px;
}
.bars-props {
  height: 31px;
  border-bottom: 1px solid #aca899;
}
.bar {
  display: flex;
  align-items: center;
  border-top: 1px solid #fff;
  border-right: 1px solid #aca899;
  border-bottom: 1px solid #aca899;
  padding-right: 1px;
}
.bars-standard .bar + .bar {
  margin-left: 6px;
  padding-right: 2px;
}
.bar > button {
  width: 24px;
  height: 24px;
  padding: 4px;
}
.grip {
  width: 6px;
  height: 24px;
  margin: 0 4px 0 3px;
  background: linear-gradient(90deg, #fff 1px, #ece9d8 1px 2px, #aca899 2px 3px, #fff 3px 4px, #ece9d8 4px 5px, #aca899 5px);
}
.bars-standard .bar + .bar .grip {
  margin-left: 0;
}
.grip.narrow {
  width: 3px;
  margin: 0 2px 0 1px;
  background: linear-gradient(90deg, #fff 1px, #ece9d8 1px 2px, #aca899 2px);
}
.sep {
  width: 6px;
  height: 24px;
  background: linear-gradient(90deg, transparent 2px, #aca899 2px 3px, #fff 3px 4px, transparent 4px);
}

/* drop-downs */
.combo {
  position: relative;
  display: flex;
  align-items: center;
  height: 22px;
  padding-left: 2px;
  background-color: #c7edcc;
  border: 1px solid #808080;
  border-right-color: #fff;
  border-bottom-color: #fff;
  box-shadow: inset 1px 1px #aca899;
}
.combo select {
  flex: 1;
  min-width: 0;
  height: 20px;
  padding-right: 18px;
  appearance: none;
  white-space: nowrap;
}
.combo::before {
  content: "";
  position: absolute;
  top: 1px;
  right: 1px;
  width: 16px;
  height: 18px;
  background-color: #ece9d8;
  border: 1px solid #fff;
  border-right-color: #716f64;
  border-bottom-color: #716f64;
  pointer-events: none;
}
.combo::after {
  content: "";
  position: absolute;
  top: 9px;
  right: 5px;
  border: 4px solid transparent;
  border-top-color: #000;
  border-bottom: 0;
  pointer-events: none;
}
.combo-layer {
  width: 178px;
  margin: 0 2px 0 1px;
}
.layer-state {
  display: flex;
}
.combo-color {
  width: 93px;
  padding-left: 4px;
}
.swatch {
  width: 10px;
  height: 10px;
  margin-right: 3px;
  border: 1px solid #000;
  background-color: #fff;
}
.combo-ltype {
  width: 158px;
}
.combo-ltype select {
  padding-right: 0;
  font-size: 11px;
}
.combo-weight {
  width: 124px;
}
.combo-plot {
  width: 120px;
  padding-left: 2px;
  background-color: #ece9d8;
  color: #aca899;
}
.combo-plot::after {
  border-top-color: #aca899;
}
.combo-plot select {
  opacity: 1;
}
.line {
  width: 35px;
  height: 1px;
  margin-right: 7px;
  background-color: #000;
}
.line.dashdot {
  width: 62px;
  margin-right: 3px;
  background: repeating-linear-gradient(90deg, #000 0 20px, transparent 20px 23px, #000 23px 24px, transparent 24px 27px);
}

/* drawing area */
.workspace {
  flex: 1;
  min-height: 0;
  display: flex;
}
.dock {
  flex: none;
  display: flex;
  align-items: flex-start;
  width: 55px;
}
.tools {
  display: flex;
  flex-direction: column;
  align-items: center;
  width: 27px;
  padding: 3px 0 5px;
  border-right: 1px solid #aca899;
  border-bottom: 1px solid #aca899;
  box-shadow: 1px 0 #fff;
}
.tools button {
  width: 24px;
  height: 23px;
  padding: 3px 4px;
}
.hgrip {
  width: 22px;
  height: 6px;
  border-top: 1px solid #fff;
  border-bottom: 1px solid #aca899;
  background: linear-gradient(#ece9d8 1px, #aca899 1px 2px, #fff 2px 3px, #ece9d8 3px);
}
.view {
  flex: 1;
  min-width: 0;
  display: flex;
  flex-direction: column;
  border-left: 1px solid #716f64;
  border-top: 1px solid #716f64;
}
.canvas-row {
  flex: 1;
  min-height: 0;
  display: flex;
  padding-right: 2px;
}
.canvas {
  flex: 1;
  min-width: 0;
  height: 100%;
  background-color: #000;
  fill: none;
  shape-rendering: crispEdges;
}
.white {
  stroke: #fff;
}
.green {
  stroke: #1fe01f;
}
.arrow,
.dim {
  fill: #1fe01f;
}
.dim {
  font: 15px Lato, sans-serif;
}
.hatch {
  stroke: #888;
}

/* scroll bars */
.vscroll {
  flex: none;
  display: flex;
  flex-direction: column;
  width: 17px;
  background-color: #f8f7f2;
}
.space-before {
  flex: 270;
}
.space-after {
  flex: 330;
}
.luna {
  width: 17px;
  height: 17px;
  border: 1px solid #fff;
  border-radius: 3px;
  background-color: #c2d3fc;
}
.luna svg {
  width: 15px;
  height: 15px;
  fill: none;
  stroke: #3c5a96;
  stroke-width: 2;
}
.luna .lines {
  stroke: #8aa8e8;
  stroke-width: 1;
}
.sheet-row {
  flex: none;
  height: 17px;
  display: flex;
}
.sheet-nav {
  display: flex;
  height: 15px;
}
.sheet-nav button {
  width: 18px;
  padding-left: 1px;
  border-right: 1px solid #aca899;
  border-bottom: 1px solid #aca899;
}
.sheet-nav svg {
  width: 16px;
  height: 16px;
}
.sheets {
  display: flex;
  padding-left: 4px;
}
.sheet {
  position: relative;
  width: 46px;
  height: 15px;
  margin-right: -2px;
  line-height: 14px;
}
.sheet svg {
  position: absolute;
  top: 0;
  left: 0;
  width: 100%;
  height: 100%;
  fill: #ece9d8;
  stroke: #000;
}
.sheet span {
  position: relative;
}
.sheet.active {
  width: 42px;
  color: #fff;
  font-weight: bold;
}
.sheet.active svg {
  fill: #000;
}
.hscroll {
  display: flex;
  width: 35%;
  height: 16px;
  margin-left: auto;
  padding-right: 19px;
}
.hscroll.small {
  width: 66px;
  margin: 0;
  padding: 0;
}
.split {
  width: 5px;
  border: 1px solid #fff;
  border-right-color: #716f64;
}
.classic {
  width: 17px;
  height: 15px;
  border: 1px solid #fff;
  border-right-color: #716f64;
  border-bottom-color: #716f64;
  background-color: #ece9d8;
}
.classic svg {
  width: 15px;
  height: 15px;
}
.track {
  flex: 1;
  background: repeating-conic-gradient(#fff 0 25%, #ece9d8 0 50%) 0 0 / 2px 2px;
}
.track.left {
  flex: 218;
}
.track.right {
  flex: 193;
}

/* command window */
.command {
  flex: none;
  height: 69px;
  padding: 9px 3px 3px 2px;
  background: linear-gradient(#000 1px, #fff 1px 4px, #ece9d8 4px 5px, #000 5px 6px, #ece9d8 6px 65px, #fff 65px 66px, #ece9d8 66px);
  border-bottom: 1px solid #aca899;
  font: 13px "Noto Sans CJK SC", sans-serif;
}
.command span {
  font: 13px/13px "Liberation Mono", monospace;
  white-space: pre;
}
.history {
  display: flex;
  height: 41px;
  border-top: 1px solid #000;
  border-left: 2px solid #444;
  border-bottom: 1px solid #94ab95;
}
.history-text {
  flex: 1;
  background-color: #c7edcc;
}
.history p {
  margin: 0;
  padding-left: 1px;
  height: 13px;
  line-height: 13px;
}
.prompt {
  display: flex;
  height: 16px;
  padding-right: 18px;
  border-left: 2px solid #444;
}
.prompt label {
  padding-left: 1px;
  line-height: 16px;
  background-color: #c7edcc;
}
.prompt input {
  flex: 1;
  background-color: #c7edcc;
}

/* status bar */
.status {
  position: relative;
  flex: none;
  height: 24px;
  display: flex;
  gap: 2px;
  padding: 4px 0 0 10px;
  font: bold 15px "Noto Sans CJK SC", sans-serif;
}
.status button {
  height: 20px;
  padding: 0 1px;
  line-height: 20px;
  border: 1px solid #fff;
  border-right-color: #aca899;
  border-bottom: 0;
}
.status button.on {
  border-color: #000 #fff #fff #000;
}
.coords {
  width: 315px;
  padding-left: 1px;
  line-height: 20px;
  font-family: "Liberation Sans", sans-serif;
  font-size: 14px;
  border: 1px solid #aca899;
  border-right-color: #fff;
  border-bottom: 0;
}
.ime {
  position: absolute;
  top: 1px;
  right: 371px;
  display: flex;
  align-items: center;
  justify-content: space-between;
  width: 139px;
  height: 23px;
  padding: 0 3px 0 2px;
  background-color: #fbfbfd;
  border: 1px solid #b8b8c0;
  color: #3a94e0;
}
.ime svg {
  width: 16px;
  height: 16px;
}

/* taskbar */
.taskbar {
  flex: none;
  height: 34px;
  display: flex;
  align-items: center;
  padding-top: 4px;
  background: linear-gradient(#2a70e0 0, #2a70e0 4px, #3c86f0 5px, #245edc 9px, #2560de 28px, #1c48b0 34px);
  color: #fff;
  font: 12px/16px "Noto Sans CJK SC", sans-serif;
  white-space: nowrap;
}
.taskbar svg {
  width: 16px;
  height: 16px;
}
.start {
  display: flex;
  align-items: center;
  gap: 6px;
  width: 97px;
  height: 29px;
  padding-left: 10px;
  border-radius: 0 10px 10px 0;
  background: linear-gradient(#66b866 0, #3c943c 4px, #348c34 20px, #2a702a 29px);
  box-shadow: inset -3px 0 4px #1c5c1c;
  font-size: 19px;
  font-style: italic;
  text-shadow: 1px 1px 1px #1c401c;
}
.start svg {
  width: 21px;
  height: 21px;
}
.start span {
  line-height: 28px;
}
.quick {
  display: flex;
  align-items: center;
  padding-left: 8px;
}
.quick button {
  width: 23px;
  height: 24px;
  padding: 4px 3px;
}
.dots {
  flex: none;
  width: 5px;
  height: 20px;
  margin-right: 5px;
  background: radial-gradient(#0c3c9c 1px, transparent 1px) 0 0 / 4px 4px;
}
.quick .dots {
  margin-right: 3px;
}
.more {
  padding: 0 8px 10px 10px;
  color: #b8d0ff;
  font-size: 14px;
  line-height: 14px;
}
.tasks {
  flex: 1;
  min-width: 0;
  display: flex;
  align-items: center;
  gap: 2px;
}
.task {
  flex: 1 1 0;
  max-width: 147px;
  height: 24px;
  display: flex;
  align-items: center;
  padding-left: 9px;
  border-radius: 2px;
  background: linear-gradient(#5a98fa 0, #3c81f3 4px, #3a7cf0 18px, #2e68d8 24px);
}
.task svg {
  margin-right: 4px;
}
.task span {
  padding-top: 2px;
  font: 10px/16px "Liberation Mono", monospace;
  white-space: pre;
}
.task.active {
  background: #1c4cb4;
  box-shadow: inset 1px 1px 2px #103080;
}
.deskband {
  display: flex;
  align-items: center;
}
.deskband svg {
  margin-right: 5px;
}
.deskband a {
  color: #a8c8f8;
  text-decoration: none;
}
.deskband .more {
  padding: 0 15px 10px 6px;
}
.tray {
  display: flex;
  align-items: center;
  gap: 2px;
  height: 100%;
  padding-right: 16px;
  background: linear-gradient(#18b0f4 0, #1290e8 5px, #1298ee 24px, #1070c8 30px);
}
.expand {
  margin-left: -8px;
}
.date {
  width: 15px;
  height: 16px;
  background-color: #fff;
  border-top: 3px solid #d01010;
  color: #000060;
  font: bold 11px "Liberation Sans", sans-serif;
  text-align: center;
}
.tray time {
  padding-left: 10px;
  font: 10px/16px "Liberation Mono", monospace;
}
```
